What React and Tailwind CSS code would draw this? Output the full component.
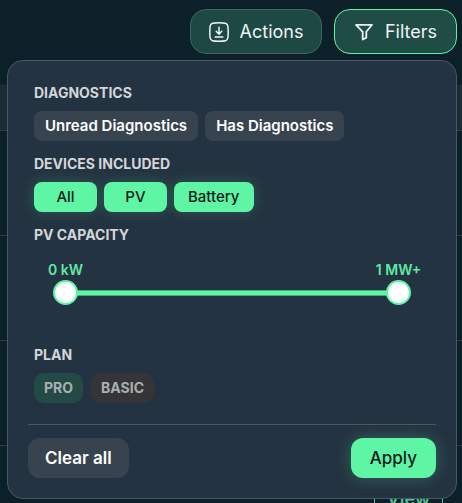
import { useState } from "react";
import clsx from "clsx";

const thumb =
  "pointer-events-none absolute inset-0 m-0 h-[25px] w-full appearance-none bg-transparent outline-none [&::-webkit-slider-thumb]:pointer-events-auto [&::-webkit-slider-thumb]:size-[25px] [&::-webkit-slider-thumb]:cursor-pointer [&::-webkit-slider-thumb]:appearance-none [&::-webkit-slider-thumb]:rounded-full [&::-webkit-slider-thumb]:border-2 [&::-webkit-slider-thumb]:border-solid [&::-webkit-slider-thumb]:border-[#5ef5a5] [&::-webkit-slider-thumb]:bg-white";

function DownloadIcon() {
  return (
    <svg aria-hidden="true" viewBox="0 0 20 20" className="size-5 shrink-0" fill="none" stroke="currentColor" strokeWidth="1.500" strokeLinecap="round" strokeLinejoin="round">
      <path d="M10 .8c3 0 5 .1 6.400.5 1.300.4 1.900 1 2.300 2.300.4 1.400.5 3.400.5 6.400s-.1 5-.5 6.400c-.4 1.300-1 1.900-2.300 2.300-1.400.4-3.400.5-6.400.5s-5-.1-6.400-.5c-1.300-.4-1.900-1-2.300-2.300C.9 15 .8 13 .8 10s.1-5 .5-6.400c.4-1.300 1-1.900 2.300-2.300C5 .9 7 .8 10 .8Z" />
      <path d="M10 5.200v6.800M7.200 9.300l2.800 2.800 2.800-2.800M6.200 15h7.600" />
    </svg>
  );
}

function FunnelIcon() {
  return (
    <svg aria-hidden="true" viewBox="0 0 20 20" className="size-5 shrink-0" fill="none" stroke="currentColor" strokeWidth="1.800" strokeLinejoin="round">
      <path d="M2 2.800h16l-5.700 7v5.800L8.700 17.500V9.800L2 2.800Z" />
    </svg>
  );
}

function Heading({ children }) {
  return <legend className="text-sm leading-5 font-bold text-[#d3d6d9]">{children}</legend>;
}

function Chip({ children, active, onClick }) {
  return (
    <button
      type="button"
      aria-pressed={active}
      onClick={onClick}
      className={clsx(
        "flex h-[30px] min-w-[63px] items-center justify-center rounded-lg text-[15px] leading-5",
        active ? "bg-[#5ef5a5] px-[14px] font-medium text-[#0b1a1c] shadow-[0_0_14px_#5ef5a533]" : "bg-[#37434f] px-[11px] font-semibold text-white",
      )}
    >
      {children}
    </button>
  );
}

function CapacitySlider() {
  const [low, setLow] = useState(0);
  const [high, setHigh] = useState(1000);
  return (
    <div className="mx-[19px] mt-[15px]">
      <div className="flex justify-between text-sm leading-5 font-semibold text-[#5eea9f]">
        <output className="flex w-[25px] justify-center whitespace-nowrap">{low} kW</output>
        <output className="flex w-[25px] justify-center whitespace-nowrap">{high === 1000 ? "1 MW+" : `${high} kW`}</output>
      </div>
      <div className="relative flex h-[25px] items-center px-3">
        <div className="h-[6px] w-full border-y border-[#4da581] bg-[#5ef5a5]" />
        <input type="range" aria-label="Minimum PV capacity" className={thumb} min="0" max="1000" value={low} onChange={(e) => setLow(Math.min(+e.target.value, high))} />
        <input type="range" aria-label="Maximum PV capacity" className={thumb} min="0" max="1000" value={high} onChange={(e) => setHigh(Math.max(+e.target.value, low))} />
      </div>
    </div>
  );
}

function FilterMenu() {
  const [on, setOn] = useState({ All: true, PV: true, Battery: true });
  const chip = (name) => (
    <Chip key={name} active={!!on[name]} onClick={() => setOn({ ...on, [name]: !on[name] })}>
      {name}
    </Chip>
  );
  return (
    <form className="absolute top-[60px] right-[5px] left-[7px] rounded-2xl border border-[#4b5763] bg-[#243341] px-5 pt-[22px] pb-5">
      <div className="flex flex-col gap-[13px] px-[6px]">
        <fieldset>
          <Heading>DIAGNOSTICS</Heading>
          <div className="mt-2 flex gap-[7px]">{["Unread Diagnostics", "Has Diagnostics"].map(chip)}</div>
        </fieldset>
        <fieldset>
          <Heading>DEVICES INCLUDED</Heading>
          <div className="mt-2 flex gap-[7px]">{["All", "PV", "Battery"].map(chip)}</div>
        </fieldset>
        <fieldset>
          <Heading>PV CAPACITY</Heading>
          <CapacitySlider />
        </fieldset>
        <fieldset className="mt-[27px]">
          <Heading>PLAN</Heading>
          <div className="mt-2 flex gap-2 text-sm leading-5 font-bold text-[#a9b0b2]">
            <button type="button" className="h-[30px] rounded-[10px] bg-[#244a46] px-[10px]">PRO</button>
            <button type="button" className="h-[30px] rounded-[10px] bg-[#353538] px-[10px]">BASIC</button>
          </div>
        </fieldset>
      </div>
      <div className="mt-[21px] flex justify-between border-t border-[#4b5763] pt-[13px] text-[17px] leading-6">
        <button type="button" className="h-10 rounded-xl bg-[#37434f] px-[17px] font-semibold text-white">Clear all</button>
        <button type="button" className="h-10 rounded-xl bg-[#5ef5a5] px-[19px] font-medium text-[#0b1a1c] shadow-[0_0_16px_#5ef5a544]">Apply</button>
      </div>
    </form>
  );
}

export default function App() {
  return (
    <main className="relative h-screen min-h-[503px] overflow-hidden bg-[#0c202a] font-[Inter,sans-serif]">
      <header className="flex justify-end gap-3 pt-[9px] pr-[5px] pb-[31px] text-lg leading-6 text-[#eef4f4]">
        <button type="button" className="flex h-[45px] w-[132px] items-center justify-center gap-[11px] rounded-2xl border border-[#3b6560] bg-[#1e4843]">
          <DownloadIcon />
          Actions
        </button>
        <button type="button" aria-expanded="true" className="flex h-[45px] w-[123px] items-center justify-center gap-[11px] rounded-2xl border border-[#5ef5a5] bg-[#1f4c44]">
          <FunnelIcon />
          Filters
        </button>
      </header>
      <div className="h-[46px] border-b border-[#2c3d48] bg-[#1d2b37]" />
      <div className="h-[105px] border-b border-[#2c3d48]" />
      <div className="h-[105px] border-b border-[#2c3d48]" />
      <div className="h-[105px] border-b border-[#2c3d48]" />
      <div className="flex h-[105px] items-center justify-end pr-[19px]">
        <button type="button" className="h-[45px] rounded-xl border border-[#4cc48d] px-3 text-lg font-semibold text-[#4cc48d]">View</button>
      </div>
      <FilterMenu />
    </main>
  );
}
